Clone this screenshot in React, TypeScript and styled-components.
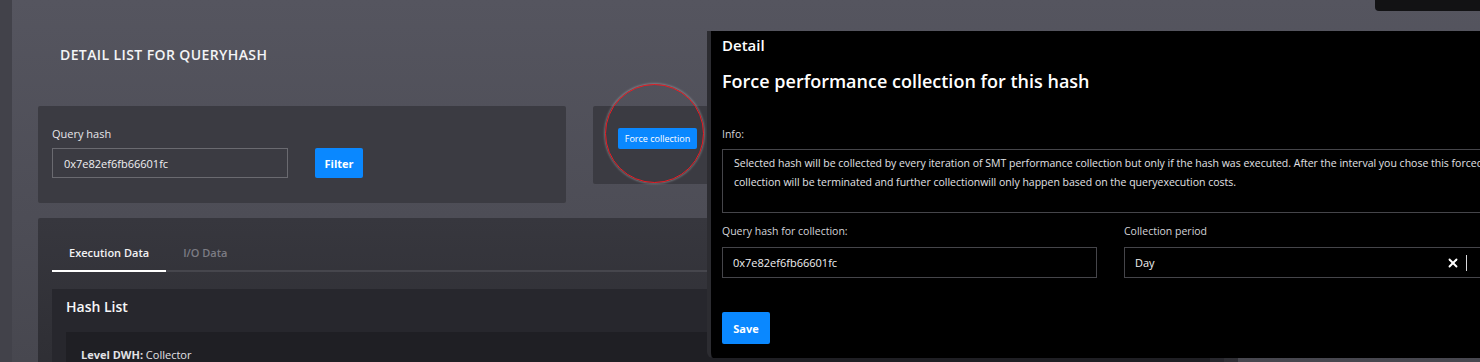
import React from "react";
import styled, { createGlobalStyle } from "styled-components";
import { X } from "lucide-react";

const GlobalStyle = createGlobalStyle`
  html, body {
    margin: 0;
    padding: 0;
    height: 362px;
    overflow: hidden;
    background: #4f4f58;
    font-family: "Open Sans", "Lato", sans-serif;
  }
`;

const Page = styled.div`
  position: relative;
  display: flex;
  height: 362px;
  overflow: hidden;
  background: linear-gradient(180deg, #55555f 0%, #4d4d56 60%, #47474f 100%);
`;

const Sidebar = styled.div`
  width: 12px;
  flex: none;
  background: #42424a;
`;

const Main = styled.div`
  flex: 1;
  padding: 46px 0 0 26px;
`;

const Title = styled.h1`
  margin: 0 0 42px 22px;
  font-size: 14px;
  line-height: 18px;
  font-weight: 600;
  letter-spacing: 0.4px;
  color: #f4f4f6;
`;

const FilterRow = styled.div`
  display: flex;
  gap: 27px;
  align-items: flex-start;
`;

const Card = styled.div<{ $w: number; $h: number }>`
  width: ${(p) => p.$w}px;
  height: ${(p) => p.$h}px;
  box-sizing: border-box;
  background: #3b3b42;
  border-radius: 2px;
`;

const FilterCard = styled(Card)`
  padding: 20px 14px;
`;

const ActionCard = styled(Card)`
  padding: 22px 25px;
`;

const Label = styled.div`
  font-size: 11px;
  line-height: 15px;
  color: #e6e6ea;
  margin-bottom: 7px;
`;

const InputRow = styled.div`
  display: flex;
  gap: 27px;
`;

const Input = styled.div<{ $w: number }>`
  width: ${(p) => p.$w}px;
  height: 30px;
  box-sizing: border-box;
  border: 1px solid #6a6a70;
  padding: 0 11px;
  display: flex;
  align-items: center;
  font-size: 11px;
  color: #f0f0f2;
`;

const BlueButton = styled.button<{ $w: number; $h: number; $fs: number; $bold?: boolean }>`
  display: block;
  width: ${(p) => p.$w}px;
  height: ${(p) => p.$h}px;
  border: none;
  border-radius: 2px;
  background: #0a88ff;
  color: #fff;
  font-family: inherit;
  font-size: ${(p) => p.$fs}px;
  font-weight: ${(p) => (p.$bold ? 700 : 400)};
  padding: 0;
  white-space: nowrap;
  cursor: pointer;
`;

const Annotated = styled.div`
  position: relative;
  display: flex;
  width: fit-content;
`;

const RedCircle = styled.span`
  position: absolute;
  left: -13px;
  top: -44px;
  width: 97px;
  height: 97px;
  border-radius: 50%;
  border: 1px solid #ec1c24;
  box-shadow: 0 0 2px 1px rgba(255, 255, 255, 0.25);
  pointer-events: none;
`;

const BigCard = styled.div`
  margin-top: 15px;
  width: 1200px;
  height: 200px;
  padding: 24px 14px 0;
  box-sizing: border-box;
  background: linear-gradient(180deg, #37373e 0%, #303036 60%, #2c2c32 100%);
  border-radius: 2px;
`;

const Tabs = styled.div`
  display: flex;
  border-bottom: 2px solid #46464d;
`;

const Tab = styled.div<{ $active?: boolean }>`
  padding: 2px 17px 0 17px;
  height: 30px;
  box-sizing: border-box;
  line-height: 18px;
  font-size: 11px;
  font-weight: 600;
  color: ${(p) => (p.$active ? "#f2f2f4" : "#7c7c84")};
  box-shadow: ${(p) => (p.$active ? "inset 0 -2px 0 #ffffff" : "none")};
  margin-bottom: -2px;
`;

const Panel = styled.div`
  margin-top: 17px;
  background: #27272d;
  padding: 8px 14px 0;
  height: 120px;
`;

const PanelTitle = styled.h2`
  margin: 0 0 15px;
  font-size: 14px;
  line-height: 20px;
  font-weight: 600;
  color: #f6f6f8;
`;

const SubPanel = styled.div`
  background: #1f1f24;
  padding: 15px 15px;
  height: 80px;
  font-size: 11px;
  color: #e2e2e6;
`;

const TopBox = styled.div`
  position: absolute;
  top: 0;
  right: 0;
  width: 105px;
  height: 11px;
  background: #121214;
  border-bottom-left-radius: 4px;
`;

const Modal = styled.div`
  position: absolute;
  left: 707px;
  top: 31px;
  width: 807px;
  height: 327px;
  box-sizing: border-box;
  background: #000;
  border-left: 4px solid #2c2c31;
  border-radius: 0 0 0 6px;
  padding: 4px 15px 0 11px;
  color: #fff;
`;

const ModalKicker = styled.div`
  font-size: 15px;
  line-height: 21px;
  font-weight: 600;
`;

const ModalTitle = styled.h3`
  margin: 13px 0 0;
  font-size: 18px;
  line-height: 25px;
  font-weight: 600;
`;

const ModalLabel = styled.div`
  font-size: 10.5px;
  line-height: 15px;
  color: #d4d4d8;
`;

const InfoLabel = styled(ModalLabel)`
  margin-top: 33px;
  margin-bottom: 7px;
`;

const InfoBox = styled.div`
  height: 64px;
  box-sizing: border-box;
  border: 1px solid #45454a;
  padding: 4px 11px;
  font-size: 10.5px;
  line-height: 19px;
  color: #e2e2e6;
  white-space: pre;
  overflow: hidden;
`;

const FormGrid = styled.div`
  margin-top: 11px;
  display: grid;
  grid-template-columns: 375px 375px;
  column-gap: 27px;
  row-gap: 8px;
`;

const Field = styled.div`
  height: 31px;
  box-sizing: border-box;
  border: 1px solid #45454a;
  padding: 0 11px 0 10px;
  display: flex;
  align-items: center;
  font-size: 11px;
  color: #f0f0f2;
`;

const Indicators = styled.div`
  margin-left: auto;
  display: flex;
  align-items: center;
  gap: 6px;
  padding-right: 20px;
`;

const Separator = styled.span`
  width: 1px;
  height: 16px;
  background: #d8d8dc;
`;

const SaveRow = styled.div`
  margin-top: 34px;
`;

const App = () => {
  return (
    <>
      <GlobalStyle />
      <Page>
        <Sidebar />
        <Main>
          <Title>DETAIL LIST FOR QUERYHASH</Title>
          <FilterRow>
            <FilterCard $w={528} $h={97}>
              <Label>Query hash</Label>
              <InputRow>
                <Input $w={236}>0x7e82ef6fb66601fc</Input>
                <BlueButton $w={48} $h={30} $fs={11} $bold>
                  Filter
                </BlueButton>
              </InputRow>
            </FilterCard>
            <ActionCard $w={700} $h={78}>
              <Annotated>
                <BlueButton $w={79} $h={21} $fs={9}>
                  Force collection
                </BlueButton>
                <RedCircle />
              </Annotated>
            </ActionCard>
          </FilterRow>
          <BigCard>
            <Tabs>
              <Tab $active>Execution Data</Tab>
              <Tab>I/O Data</Tab>
            </Tabs>
            <Panel>
              <PanelTitle>Hash List</PanelTitle>
              <SubPanel>
                <b>Level DWH:</b> Collector
              </SubPanel>
            </Panel>
          </BigCard>
        </Main>
        <TopBox />
        <Modal>
          <ModalKicker>Detail</ModalKicker>
          <ModalTitle>Force performance collection for this hash</ModalTitle>
          <InfoLabel>Info:</InfoLabel>
          <InfoBox>
            {
              "Selected hash will be collected by every iteration of SMT performance collection but only if the hash was executed. After the interval you chose this forced\ncollection will be terminated and further collectionwill only happen based on the queryexecution costs."
            }
          </InfoBox>
          <FormGrid>
            <ModalLabel>Query hash for collection:</ModalLabel>
            <ModalLabel>Collection period</ModalLabel>
            <Field>0x7e82ef6fb66601fc</Field>
            <Field>
              Day
              <Indicators>
                <X size={14} strokeWidth={3.2} color="#ffffff" />
                <Separator />
              </Indicators>
            </Field>
          </FormGrid>
          <SaveRow>
            <BlueButton $w={48} $h={32} $fs={11} $bold>
              Save
            </BlueButton>
          </SaveRow>
        </Modal>
      </Page>
    </>
  );
};

export default App;
